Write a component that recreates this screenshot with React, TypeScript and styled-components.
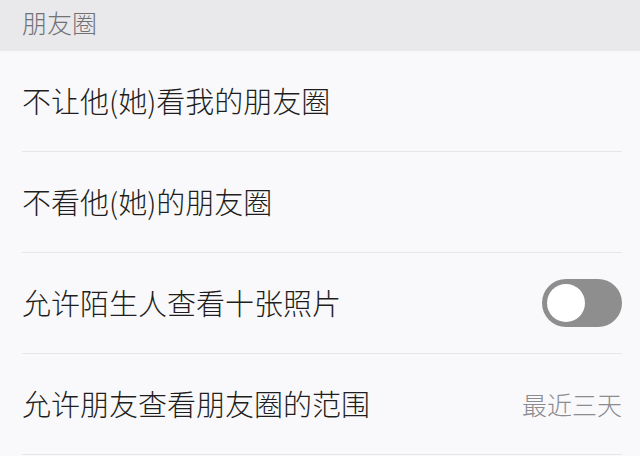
import React from 'react';
import styled, { createGlobalStyle } from 'styled-components';

const GlobalStyle = createGlobalStyle`
  html, body {
    margin: 0;
    padding: 0;
    background: #f9f9fb;
  }
  body {
    font-family: "Noto Sans CJK SC", "Noto Sans", sans-serif;
  }
`;

interface RowItem {
  label: string;
  kind: 'link' | 'toggle' | 'value';
  value?: string;
}

const rows: RowItem[] = [
  { label: '不让他(她)看我的朋友圈', kind: 'link' },
  { label: '不看他(她)的朋友圈', kind: 'link' },
  { label: '允许陌生人查看十张照片', kind: 'toggle' },
  { label: '允许朋友查看朋友圈的范围', kind: 'value', value: '最近三天' },
];

const App = () => {
  return (
    <>
      <GlobalStyle />
      <Page>
        <SectionHeader>朋友圈</SectionHeader>
        <List>
          {rows.map((row) => (
            <Row key={row.label}>
              <Label>{row.label}</Label>
              {row.kind === 'toggle' && (
                <Switch>
                  <Knob />
                </Switch>
              )}
              {row.kind === 'value' && <Value>{row.value}</Value>}
            </Row>
          ))}
        </List>
      </Page>
    </>
  );
};

export default App;


const Page = styled.div`
  width: 640px;
  height: 456px;
  overflow: hidden;
  background: #f9f9fb;
`;

const SectionHeader = styled.div`
  height: 51px;
  box-sizing: border-box;
  display: flex;
  align-items: center;
  padding: 0 0 7px 22px;
  background: #e9e9ec;
  color: #727276;
  font-size: 25px;
  font-weight: 300;
  line-height: 1;
`;

const List = styled.div`
  display: flex;
  flex-direction: column;
  padding: 0 18px 0 22px;
`;

const Row = styled.div`
  height: 101px;
  box-sizing: border-box;
  display: flex;
  align-items: center;
  justify-content: space-between;
  border-bottom: 1px solid #e6e6ec;
`;

const Label = styled.span`
  font-size: 29px;
  font-weight: 300;
  line-height: 1;
  color: #1e1e20;
  padding-bottom: 2px;
`;

const Value = styled.span`
  font-size: 25px;
  font-weight: 300;
  line-height: 1;
  color: #8b8b90;
`;

const Switch = styled.div`
  width: 80px;
  height: 48px;
  box-sizing: border-box;
  border-radius: 24px;
  background: #8e8e8f;
  padding: 5px;
  display: flex;
  align-items: center;
`;

const Knob = styled.div`
  width: 38px;
  height: 38px;
  border-radius: 50%;
  background: #ffffff;
`;
